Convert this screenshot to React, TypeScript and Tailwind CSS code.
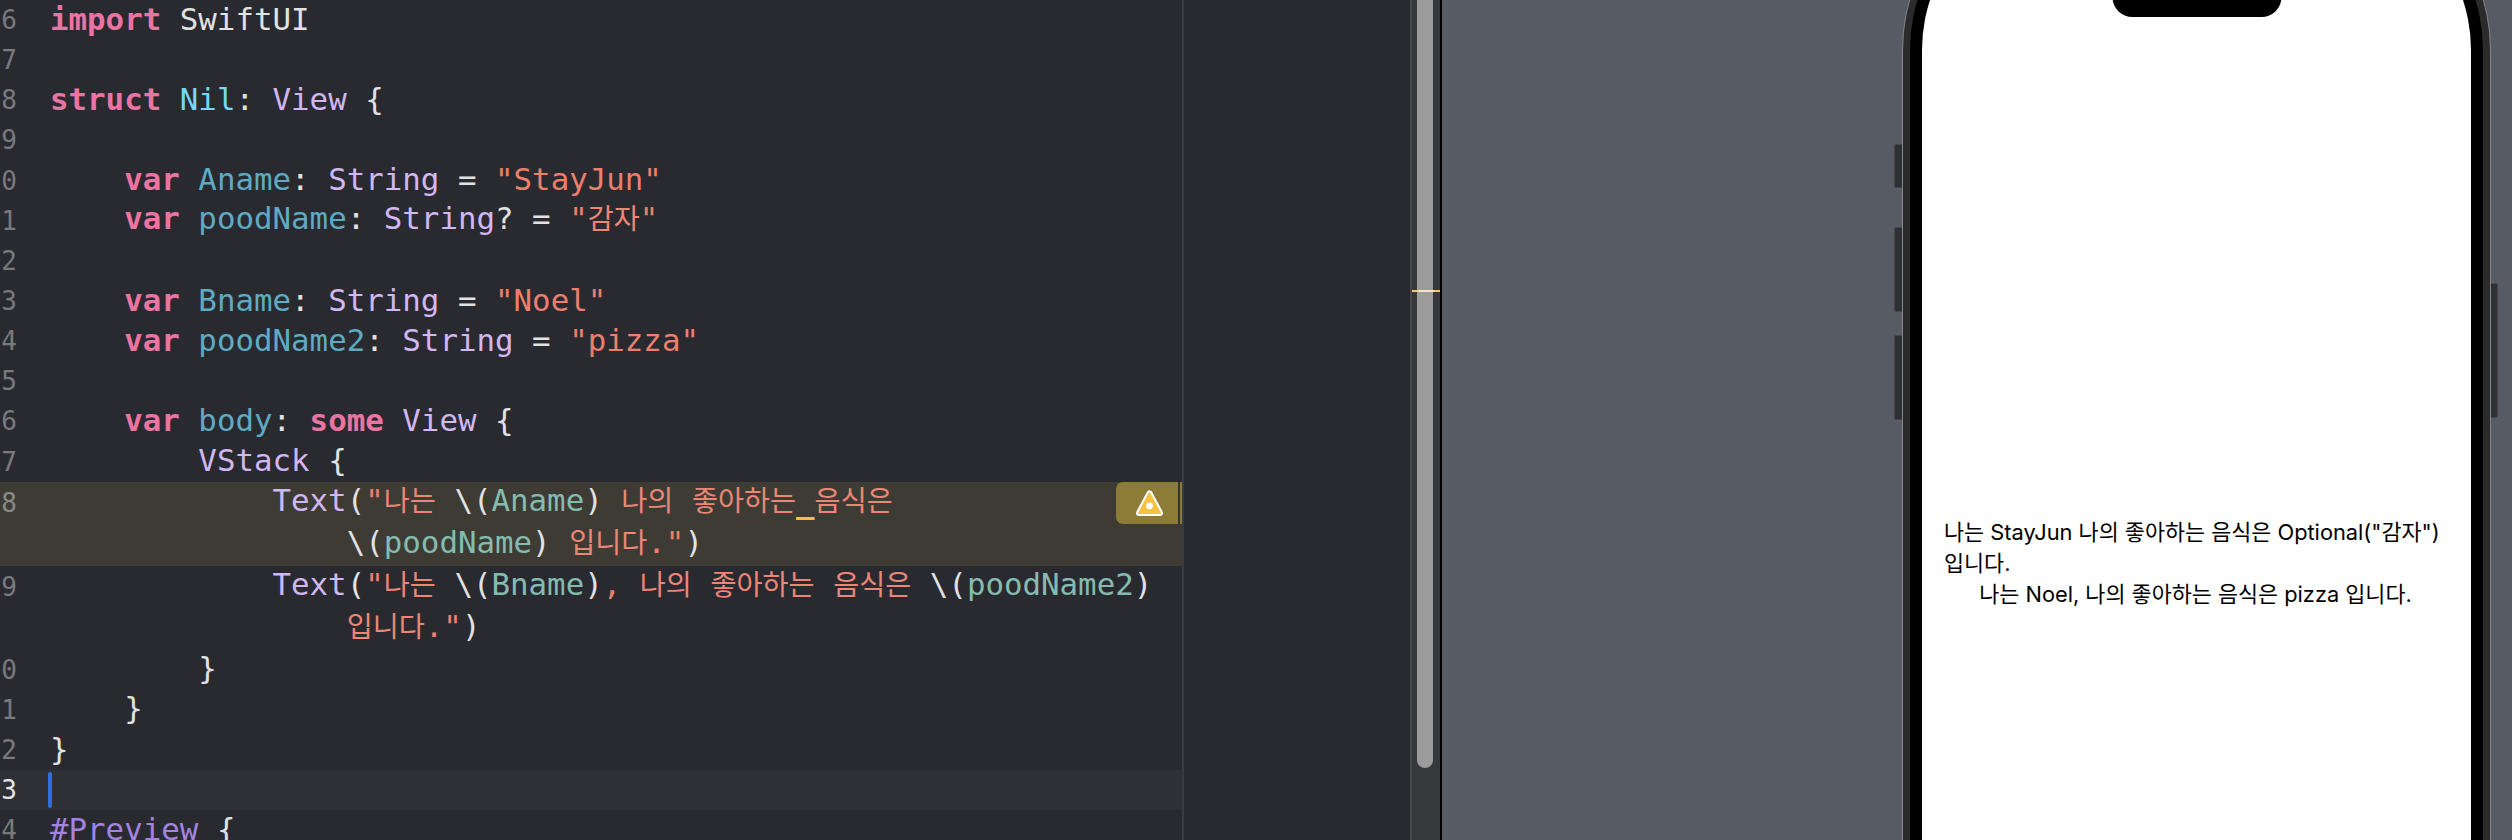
const mono = "font-['DejaVu_Sans_Mono','Noto_Sans_CJK_KR',monospace]";

const kw = 'font-bold text-[#ea74a2]';
const type = 'text-[#d2b7f2]';
const prop = 'text-[#5fabc4]';
const str = 'text-[#ec7f6d]';
const interp = 'text-[#84bdb0]';

function Ko({ children }: { children: string }) {
  return <span className="text-[28.3px] text-[#ec8676]">{children}</span>;
}

function Row({
  num,
  children,
  className = 'h-[40.15px]',
  numClass = 'text-[#797a7e]',
}: {
  num?: string;
  children?: React.ReactNode;
  className?: string;
  numClass?: string;
}) {
  return (
    <div className={`flex items-center ${className}`}>
      <div className={`w-[17px] shrink-0 overflow-hidden flex justify-end text-[26px] ${numClass}`}>
        {num}
      </div>
      <div className="ml-[33px] whitespace-pre pb-[3px]">{children}</div>
    </div>
  );
}

function Code() {
  return (
    <div className={`w-[1182px] shrink-0 ${mono} text-[30.8px] leading-[40px] text-[#e2e2e3]`}>
      <Row num="6">
        <span className={kw}>import</span> SwiftUI
      </Row>
      <Row num="7" />
      <Row num="8">
        <span className={kw}>struct</span> <span className="text-[#74d8f6]">Nil</span>:{' '}
        <span className={type}>View</span> {'{'}
      </Row>
      <Row num="9" />
      <Row num="10">
        {'    '}
        <span className={kw}>var</span> <span className={prop}>Aname</span>:{' '}
        <span className={type}>String</span> = <span className={str}>"StayJun"</span>
      </Row>
      <Row num="11">
        {'    '}
        <span className={kw}>var</span> <span className={prop}>poodName</span>:{' '}
        <span className={type}>String</span>? = <span className={str}>"</span>
        <Ko>감자</Ko>
        <span className={str}>"</span>
      </Row>
      <Row num="12" />
      <Row num="13">
        {'    '}
        <span className={kw}>var</span> <span className={prop}>Bname</span>:{' '}
        <span className={type}>String</span> = <span className={str}>"Noel"</span>
      </Row>
      <Row num="14">
        {'    '}
        <span className={kw}>var</span> <span className={prop}>poodName2</span>:{' '}
        <span className={type}>String</span> = <span className={str}>"pizza"</span>
      </Row>
      <Row num="15" />
      <Row num="16">
        {'    '}
        <span className={kw}>var</span> <span className={prop}>body</span>:{' '}
        <span className={kw}>some</span> <span className={type}>View</span> {'{'}
      </Row>
      <Row num="17">
        {'        '}
        <span className={type}>VStack</span> {'{'}
      </Row>

      <div className="relative bg-[#3e3b35] h-[84px]">
        <Row num="18" className="h-[42px]" numClass="text-[#8b8a85]">
          {'            '}
          <span className={type}>Text</span>(<span className={str}>"</span>
          <Ko>나는</Ko> \(<span className={interp}>Aname</span>) <Ko>나의</Ko> <Ko>좋아하는</Ko>
          <span className="underline decoration-[#f0c33c] decoration-[3px] underline-offset-[6px]"> </span>
          <Ko>음식은</Ko>
        </Row>
        <Row className="h-[42px]">
          {'                '}\(<span className={interp}>poodName</span>) <Ko>입니다</Ko>
          <span className={str}>."</span>)
        </Row>
        <div className="absolute right-0 top-0 flex h-[42px]">
          <div className="flex w-[62px] items-center justify-center rounded-l-[7px] bg-[#8b7d37] pl-[4px]">
            <svg width="29" height="28" viewBox="0 0 29 28">
              <path
                d="M14.5 4.5 L25 24 L4 24 Z"
                fill="#ffffff"
                stroke="#ffffff"
                strokeWidth="6"
                strokeLinejoin="round"
              />
              <path
                d="M14.5 4.5 L25 24 L4 24 Z"
                fill="#f5c242"
                stroke="#f5c242"
                strokeWidth="2"
                strokeLinejoin="round"
              />
              <circle cx="14.5" cy="17" r="3.4" fill="#ffffff" />
            </svg>
          </div>
          <div className="w-[2px] bg-[#35332e]" />
          <div className="w-[2px] bg-[#8b7d37]" />
        </div>
      </div>

      <Row num="19" className="h-[42px]">
        {'            '}
        <span className={type}>Text</span>(<span className={str}>"</span>
        <Ko>나는</Ko> \(<span className={interp}>Bname</span>)<span className={str}>,</span> <Ko>나의</Ko>{' '}
        <Ko>좋아하는</Ko> <Ko>음식은</Ko> \(<span className={interp}>poodName2</span>)
      </Row>
      <Row className="h-[42px]">
        {'                '}
        <Ko>입니다</Ko>
        <span className={str}>."</span>)
      </Row>
      <Row num="20">{'        }'}</Row>
      <Row num="21">{'    }'}</Row>
      <Row num="22">{'}'}</Row>
      <div className="relative bg-[#2f3036]">
        <Row num="23" className="h-[40px]" numClass="text-[#e6e6e6]" />
        <div className="absolute left-[48px] top-[2px] h-[36px] w-[4px] rounded-[2px] bg-[#2f6fe4]" />
      </div>
      <Row num="24">
        <span className="text-[#a584e0]">#Preview</span> {'{'}
      </Row>
    </div>
  );
}

function Scrollbar() {
  return (
    <div className="relative flex w-[30px] shrink-0 justify-center border-l-2 border-[#47484c] bg-[#37383c]">
      <div className="-ml-[2px] h-[768px] w-[16px] rounded-b-[8px] bg-[#9b9b9b]" />
      <div className="absolute inset-x-0 top-[290px] h-[2px] bg-[#f5c97a]" />
      <div className="absolute left-[6px] top-[290px] h-[2px] w-[16px] bg-[#f7e5c2]" />
    </div>
  );
}

function Phone() {
  return (
    <div className="relative ml-[460px] -mt-[130px] h-[1400px] w-[589px]">
      <div className="absolute -left-[8px] top-[274px] h-[44px] w-[8px] rounded-l-[2px] border border-r-0 border-[#46484d] bg-[#2f3033]" />
      <div className="absolute -left-[8px] top-[357px] h-[85px] w-[8px] rounded-l-[2px] border border-r-0 border-[#46484d] bg-[#2f3033]" />
      <div className="absolute -left-[8px] top-[465px] h-[85px] w-[8px] rounded-l-[2px] border border-r-0 border-[#46484d] bg-[#2f3033]" />
      <div className="absolute -right-[7px] top-[413px] h-[135px] w-[7px] rounded-r-[2px] border border-l-0 border-[#46484d] bg-[#2f3033]" />
      <div className="h-full rounded-[180px] border-[1.5px] border-[#85878b] bg-[#2b2b2c] p-[7px]">
        <div className="h-full rounded-[172px] bg-black p-[12px]">
          <div className="relative h-full rounded-[160px] bg-white pt-[627px] pl-[22px] font-['Inter','Noto_Sans_CJK_KR',sans-serif] text-[21.8px] leading-[31px] text-black">
            <div className="absolute left-1/2 top-[80px] h-[47px] w-[169px] -translate-x-1/2 rounded-b-[20px] bg-black" />
            <div className="w-[503px]">
              <p className="whitespace-nowrap">나는 StayJun 나의 좋아하는 음식은 Optional("감자")</p>
              <p>입니다.</p>
              <p className="whitespace-nowrap text-center">나는 Noel, 나의 좋아하는 음식은 pizza 입니다.</p>
            </div>
          </div>
        </div>
      </div>
    </div>
  );
}

export default function App() {
  return (
    <div className="flex h-[840px] w-[2512px] overflow-hidden bg-[#292a30]">
      <Code />
      <div className="h-full w-[2px] shrink-0 bg-[#3a3b40]" />
      <div className="w-[226px] shrink-0" />
      <Scrollbar />
      <div className="w-[2px] shrink-0 bg-black" />
      <div className="flex-1 min-w-0 bg-[#575b63]">
        <Phone />
      </div>
    </div>
  );
}
